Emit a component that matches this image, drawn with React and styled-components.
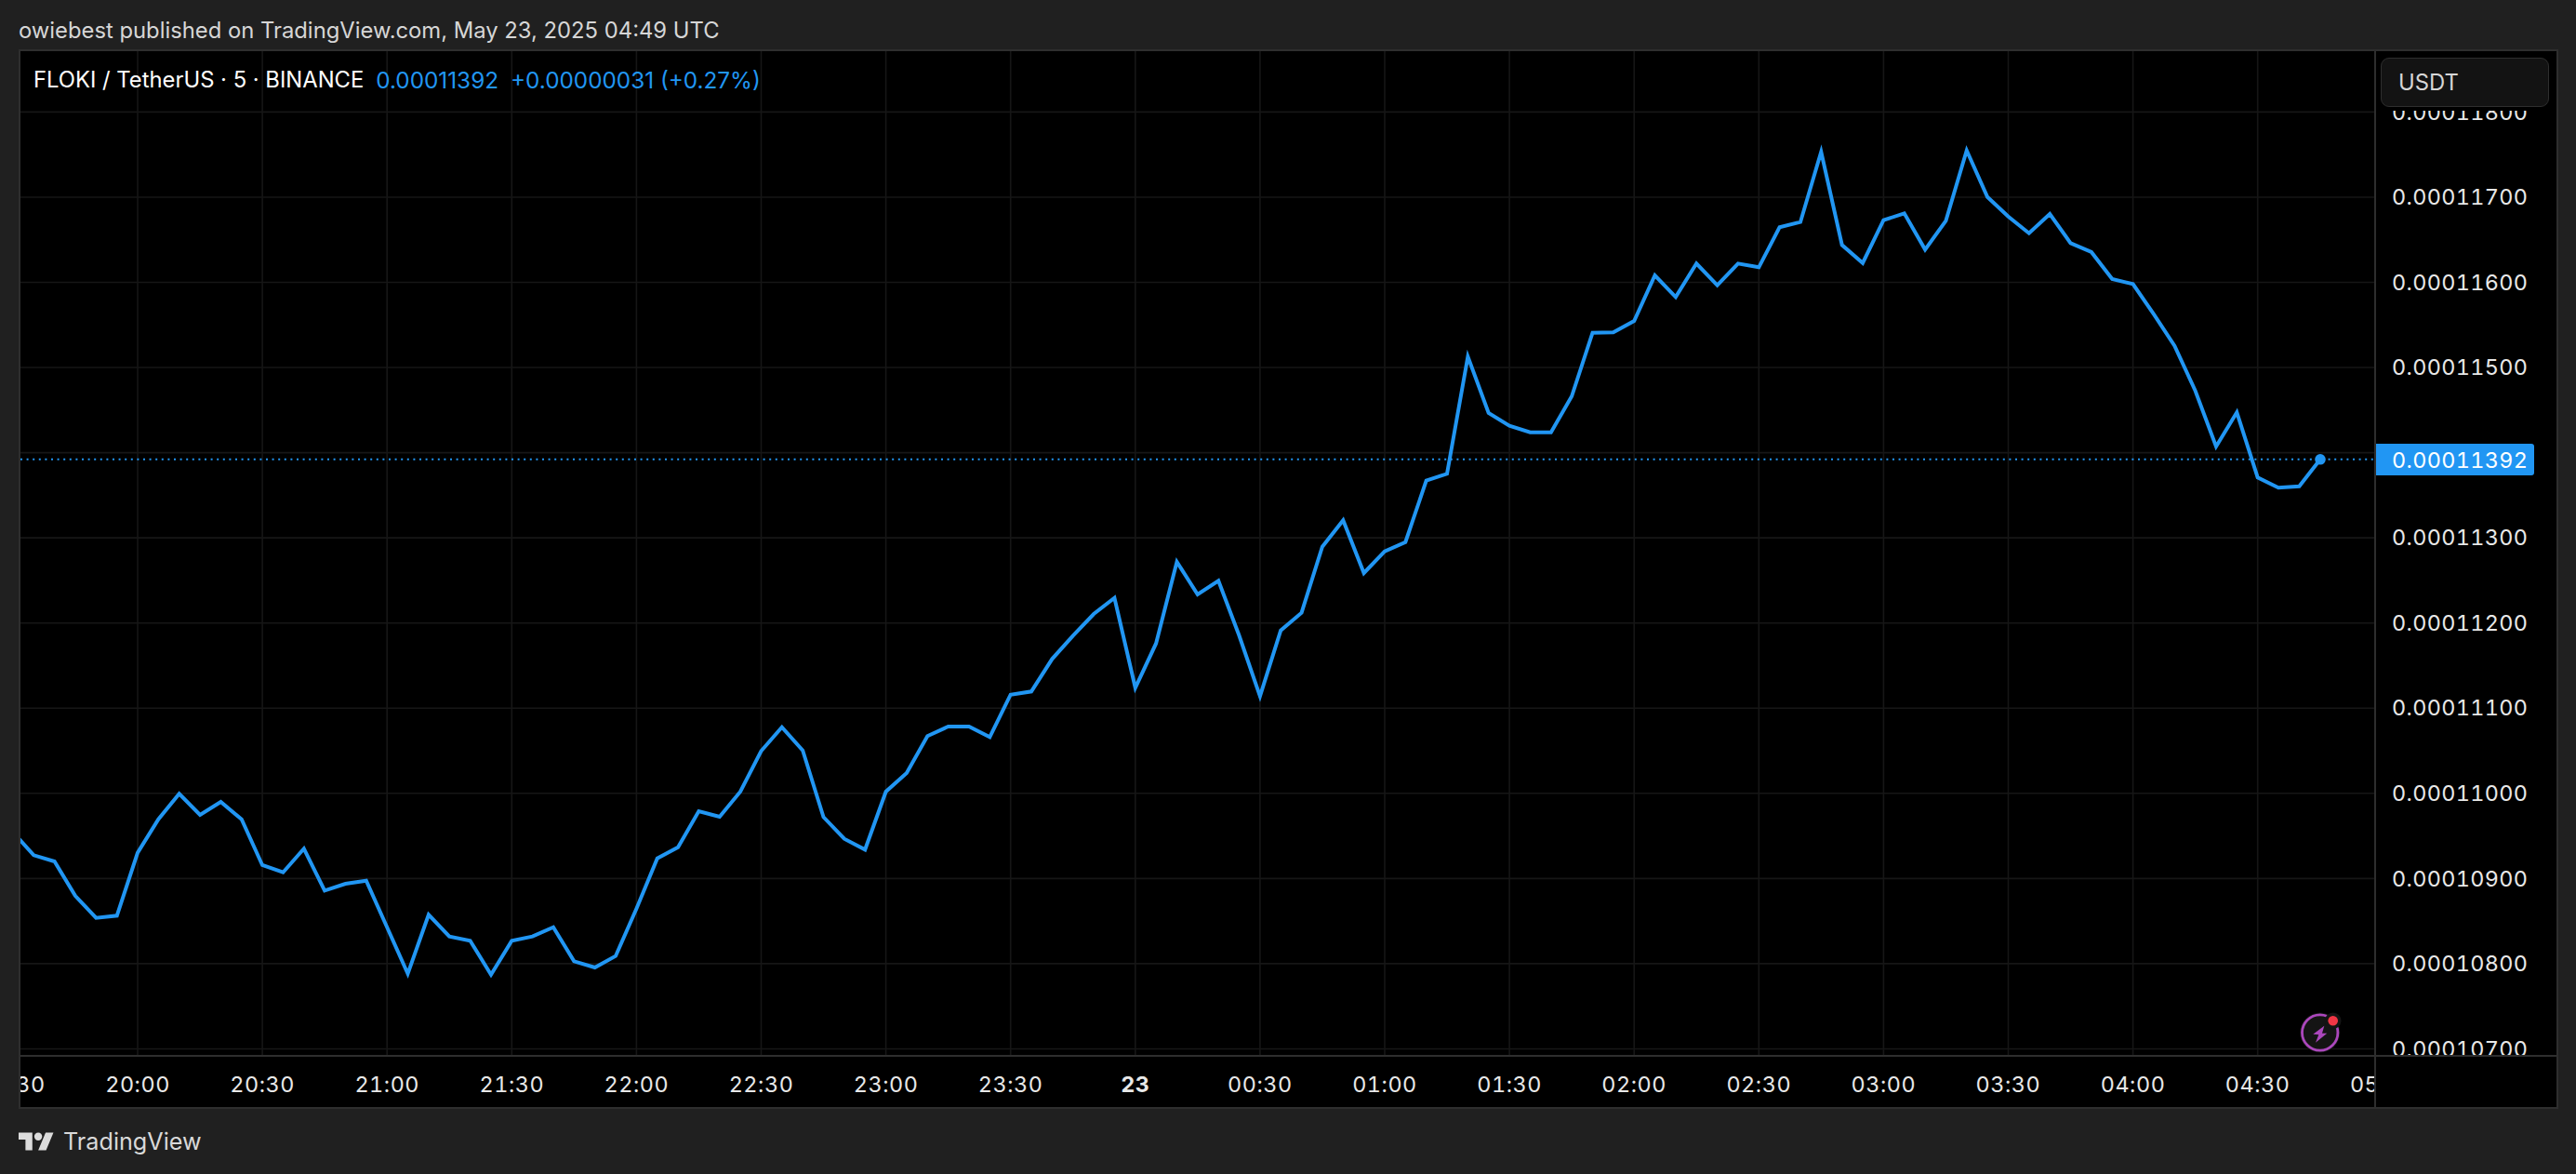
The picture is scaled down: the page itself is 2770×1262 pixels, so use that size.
import React from "react";
import styled, { createGlobalStyle } from "styled-components";

const FONT = `Inter, "Liberation Sans", Arial, sans-serif`;
const BLUE = "#2196f3";

const GlobalStyle = createGlobalStyle`
  html, body { margin: 0; padding: 0; background: #202020; }
  body { font-family: ${FONT}; -webkit-font-smoothing: antialiased; }
`;

const Page = styled.div`
  width: 2770px;
  height: 1262px;
  overflow: hidden;
  background: #202020;
  display: flex;
  flex-direction: column;
  padding: 0 19px 0 20px;
  box-sizing: border-box;
`;

const Header = styled.header`
  height: 53px;
  flex: none;
  display: flex;
  align-items: center;
  padding-top: 11px;
  box-sizing: border-box;
  font-size: 23.8px;
  color: #d6d6d6;
  white-space: nowrap;
`;

const Frame = styled.main`
  height: 1139px;
  flex: none;
  box-sizing: border-box;
  border: 2px solid #2e2e2e;
  background: #000;
  display: grid;
  grid-template-columns: 2533px 1fr;
  grid-template-rows: 1081px 1fr;
`;

const Pane = styled.section`
  position: relative;
  overflow: hidden;
  border-right: 2px solid #2e2e2e;
  border-bottom: 2px solid #2e2e2e;
`;

const ChartSvg = styled.svg`
  display: block;
  width: 2533px;
  height: 1081px;
`;

const Legend = styled.div`
  position: absolute;
  left: 14px;
  top: 17px;
  display: flex;
  align-items: center;
  gap: 13px;
  font-size: 23.8px;
  line-height: 28px;
  white-space: nowrap;
`;

const Symbol = styled.span`
  color: #fff;
`;

const Quote = styled.span`
  color: ${BLUE};
  font-size: 24.3px;
`;

const PowerBadge = styled.svg`
  position: absolute;
  left: 2450px;
  top: 1030px;
  width: 48px;
  height: 48px;
`;

const PriceAxis = styled.aside`
  position: relative;
  overflow: hidden;
  border-bottom: 2px solid #2e2e2e;
`;

const PriceScale = styled.div`
  margin-top: 19.6px;
`;

const PriceLabel = styled.div`
  height: 91.55px;
  line-height: 91.55px;
  padding-left: 17px;
  font-size: 23.4px;
  letter-spacing: 0.35px;
  font-variant-numeric: tabular-nums;
  color: #e8e8e8;
  white-space: nowrap;
`;

const UnitStrip = styled.div`
  position: absolute;
  left: 0;
  right: 0;
  top: 0;
  height: 64px;
  background: #000;
  padding: 7px 0 0 5px;
  box-sizing: border-box;
`;

const UnitBox = styled.div`
  width: 181px;
  height: 53px;
  box-sizing: border-box;
  display: flex;
  align-items: center;
  padding-left: 18px;
  background: #131313;
  border: 1.5px solid #2e2e2e;
  border-radius: 9px;
  font-size: 23.8px;
  color: #d6d6d6;
`;

const PriceTag = styled.div`
  position: absolute;
  left: 0;
  top: 422px;
  width: 170px;
  height: 34px;
  display: flex;
  align-items: center;
  padding-left: 17px;
  box-sizing: border-box;
  background: ${BLUE};
  border-radius: 0 3px 3px 0;
  font-size: 23.4px;
  letter-spacing: 0.35px;
  font-variant-numeric: tabular-nums;
  color: #fff;
`;

const TimeAxis = styled.div`
  overflow: hidden;
  border-right: 2px solid #2e2e2e;
  display: flex;
  align-items: center;
  padding-top: 4px;
  box-sizing: border-box;
`;

const TimeTrack = styled.div`
  display: flex;
  flex: none;
  margin-left: -75.1px;
`;

const TimeLabel = styled.span`
  flex: none;
  width: 134.1px;
  text-align: center;
  font-size: 23.4px;
  letter-spacing: 0.55px;
  font-variant-numeric: tabular-nums;
  font-weight: ${(p) => (p.$bold ? 700 : 400)};
  color: #e8e8e8;
  white-space: nowrap;
`;

const AxisCorner = styled.div``;

const Footer = styled.footer`
  flex: 1;
  display: flex;
  align-items: center;
  gap: 10px;
  color: #d6d6d6;
`;

const LogoMark = styled.svg`
  width: 38px;
  height: 20px;
  flex: none;
  fill: #dcdcdc;
`;

const LogoWord = styled.span`
  font-size: 25.2px;
  line-height: 30px;
  color: #d9d9d9;
`;

const YS = [
  894.7, 919.3, 926, 963, 986.7, 984.3, 916.7, 880.7, 853.3, 876, 862, 880.7, 930, 937.7, 912.3,
  957.3, 950, 946.7, 996.7, 1046.7, 983.3, 1006.7, 1011.3, 1047.7, 1011.3, 1006.7, 996.7, 1033.3,
  1040, 1027.7, 976.7, 922.7, 910.7, 872, 878, 851, 807.3, 781.7, 806.7, 878.3, 901.7, 913.3, 851,
  831, 791.3, 781, 781, 792.3, 746.7, 743.3, 708.3, 683.3, 660, 642.7, 739.3, 691.7, 604, 639,
  624.3, 683.3, 748.3, 677.7, 658.7, 587.7, 559.3, 616, 592.7, 582.7, 516.7, 509.3, 383.3, 444,
  457.7, 464.7, 464.7, 426, 357.7, 357.3, 345, 296, 319.3, 283.3, 306.7, 283.3, 287.3, 244.3,
  238.7, 163.3, 263.3, 282.7, 236.7, 229.3, 268.3, 237.3, 161.7, 211.7, 232.7, 250.7, 230, 261.3,
  271, 300, 305.3, 337.7, 371.7, 420, 480, 443.3, 513.3, 524.3, 522.7, 494,
];
const STEP = 134.1 / 6;
const LINE = YS.map((y, i) => `${(148 + STEP * (i - 6)).toFixed(1)},${y}`).join(" ");

const VERTICALS = Array.from({ length: 19 }, (_, i) => 13.9 + 134.1 * i);
const HORIZONTALS = Array.from({ length: 12 }, (_, i) => 120.4 + 91.55 * i);

const PRICES = [
  "0.00011800", "0.00011700", "0.00011600", "0.00011500", "", "0.00011300",
  "0.00011200", "0.00011100", "0.00011000", "0.00010900", "0.00010800", "0.00010700",
];

const TIMES = [
  "19:30", "20:00", "20:30", "21:00", "21:30", "22:00", "22:30", "23:00", "23:30", "23",
  "00:30", "01:00", "01:30", "02:00", "02:30", "03:00", "03:30", "04:00", "04:30", "05:00",
];

function Chart() {
  return (
    <ChartSvg viewBox="22 55 2533 1081">
      <g stroke="#161616" strokeWidth="1.6">
        {VERTICALS.map((x) => (
          <line key={x} x1={x} x2={x} y1="55" y2="1136" />
        ))}
        {HORIZONTALS.map((y) => (
          <line key={y} x1="22" x2="2555" y1={y} y2={y} />
        ))}
      </g>
      <line x1="22" x2="2555" y1="493.8" y2="493.8" stroke={BLUE} strokeWidth="2" strokeDasharray="2 4.6" />
      <polyline points={LINE} fill="none" stroke={BLUE} strokeWidth="4" strokeLinejoin="miter" />
      <circle cx="2495" cy="493.8" r="5.8" fill={BLUE} />
    </ChartSvg>
  );
}

export default function App() {
  return (
    <Page>
      <GlobalStyle />
      <Header>owiebest published on TradingView.com, May 23, 2025 04:49 UTC</Header>
      <Frame>
        <Pane>
          <Chart />
          <Legend>
            <Symbol>FLOKI / TetherUS · 5 · BINANCE</Symbol>
            <Quote>0.00011392</Quote>
            <Quote>+0.00000031 (+0.27%)</Quote>
          </Legend>
          <PowerBadge viewBox="0 0 48 48">
            <circle cx="22.7" cy="25" r="21.5" fill="#141414" />
            <circle cx="22.7" cy="25" r="19.2" fill="none" stroke="#ab47bc" strokeWidth="2.8" />
            <circle cx="36.7" cy="12.3" r="8.8" fill="#141414" />
            <path d="M27.3 17.7 L15.3 26.7 L21.3 27.3 L18 35.7 L30.3 25.7 L25 25.7 Z" fill="#ab47bc" />
            <circle cx="36.7" cy="12.3" r="5.3" fill="#f23645" />
          </PowerBadge>
        </Pane>
        <PriceAxis>
          <PriceScale>
            {PRICES.map((p, i) => (
              <PriceLabel key={i}>{p}</PriceLabel>
            ))}
          </PriceScale>
          <UnitStrip>
            <UnitBox>USDT</UnitBox>
          </UnitStrip>
          <PriceTag>0.00011392</PriceTag>
        </PriceAxis>
        <TimeAxis>
          <TimeTrack>
            {TIMES.map((t) => (
              <TimeLabel key={t} $bold={t === "23"}>{t}</TimeLabel>
            ))}
          </TimeTrack>
        </TimeAxis>
        <AxisCorner />
      </Frame>
      <Footer>
        <LogoMark viewBox="0 3.6 36 18.8">
          <path d="M14 22H7V11H0V4h14v18ZM28 22h-8l7.5-18h8L28 22Z" />
          <circle cx="20" cy="8" r="4" />
        </LogoMark>
        <LogoWord>TradingView</LogoWord>
      </Footer>
    </Page>
  );
}
